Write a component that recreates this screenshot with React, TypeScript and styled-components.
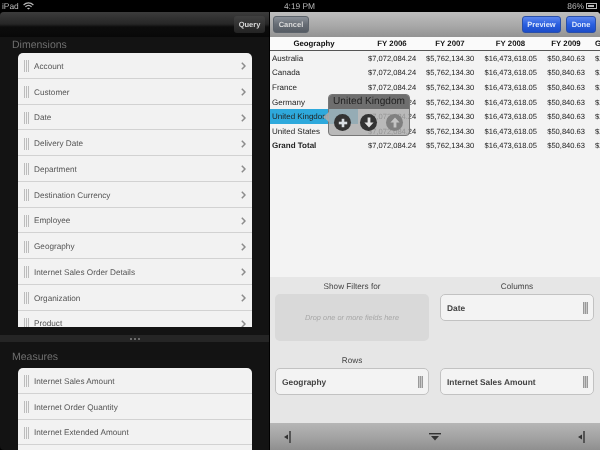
import styled, { createGlobalStyle } from 'styled-components';

const GlobalStyle = createGlobalStyle`
  html, body {
    margin: 0;
    padding: 0;
    background: #000;
  }
  * {
    box-sizing: border-box;
  }
`;

const Screen = styled.div`
  width: 600px;
  height: 450px;
  overflow: hidden;
  display: flex;
  flex-direction: column;
  background: #000;
  font-family: 'Liberation Sans', Arial, sans-serif;
  text-rendering: geometricPrecision;
  filter: blur(0.35px);
`;

const StatusBar = styled.div`
  height: 12px;
  flex: none;
  display: grid;
  grid-template-columns: 1fr auto 1fr;
  align-items: center;
  padding: 0 3px 0 2px;
  color: #b8b8b8;
  font-size: 8.4px;
`;

const StatusLeft = styled.div`
  display: flex;
  align-items: center;
  gap: 4px;
`;

const StatusRight = styled.div`
  display: flex;
  align-items: center;
  justify-content: flex-end;
  gap: 2px;
`;

const Battery = styled.span`
  width: 11px;
  height: 6px;
  border: 1px solid #b8b8b8;
  padding: 1px;
  display: block;

  &::before {
    content: '';
    display: block;
    width: 86%;
    height: 100%;
    background: #b8b8b8;
  }
`;

const Panels = styled.div`
  flex: 1;
  min-height: 0;
  display: flex;
  gap: 1px;
  border-radius: 4px 4px 0 0;
  overflow: hidden;
`;

const LeftPanel = styled.div`
  width: 269px;
  flex: none;
  display: flex;
  flex-direction: column;
  background: #131313;
  border-bottom-left-radius: 4px;
  overflow: hidden;
`;

const LeftToolbar = styled.div`
  height: 25px;
  flex: none;
  display: flex;
  align-items: center;
  justify-content: flex-end;
  padding-right: 4px;
  background: linear-gradient(#3c3c3c, #262626 48%, #0c0c0c 60%, #080808);
`;

const QueryButton = styled.div`
  width: 31px;
  height: 17px;
  border-radius: 3px;
  background: linear-gradient(#404040, #232323);
  color: #d8d8d8;
  font-size: 7.5px;
  font-weight: 700;
  display: flex;
  align-items: center;
  justify-content: center;
`;

const SectionTitle = styled.div`
  height: 16px;
  padding-left: 12px;
  display: flex;
  align-items: center;
  color: #6f6f6f;
  font-size: 10.5px;
`;

const DimensionsSection = styled.div`
  height: 298px;
  flex: none;
  padding-bottom: 8px;
  display: flex;
  flex-direction: column;
`;

const MeasuresSection = styled.div`
  flex: 1;
  min-height: 0;
  padding-top: 7px;
  display: flex;
  flex-direction: column;
  gap: 3px;
`;

const FieldList = styled.div`
  flex: 1;
  min-height: 0;
  margin: 0 17px 0 18px;
  overflow: hidden;
  background: #f2f2f2;
  border-radius: 5px 5px 0 0;
`;

const FieldRow = styled.div`
  height: 25.75px;
  display: flex;
  align-items: center;
  padding: 2px 6px 0;
  border-bottom: 1px solid #d2d2d2;
  color: #555;
  font-size: 8.2px;
`;

const FieldName = styled.span`
  flex: 1;
  margin-left: 5px;
`;

const Grip = styled.span<{ $dark?: boolean }>`
  width: 5px;
  height: 12px;
  flex: none;
  background: repeating-linear-gradient(
    90deg,
    ${(p) => (p.$dark ? '#999' : '#bcbcbc')} 0 1px,
    ${(p) => (p.$dark ? '#c8c8c8' : 'transparent')} 1px 2px
  );
`;

const Splitter = styled.div`
  height: 7px;
  flex: none;
  background: #252525;
  display: flex;
  align-items: center;
  justify-content: center;
  gap: 2px;
`;

const SplitterDot = styled.span`
  width: 2px;
  height: 2px;
  background: #6a6a6a;
`;

const RightPanel = styled.div`
  flex: 1;
  min-width: 0;
  display: flex;
  flex-direction: column;
  background: #f3f3f3;
`;

const RightToolbar = styled.div`
  height: 25px;
  flex: none;
  display: flex;
  align-items: center;
  justify-content: space-between;
  padding: 0 4px 0 3px;
  background: linear-gradient(#bebebe, #a8a8a8 55%, #939393);
`;

const ToolbarGroup = styled.div`
  display: flex;
  gap: 5px;
`;

const ToolButton = styled.div<{ $blue?: boolean; $w: number }>`
  width: ${(p) => p.$w}px;
  height: 17px;
  border-radius: 3px;
  border: 1px solid ${(p) => (p.$blue ? '#2a4fa8' : '#5c636b')};
  background: ${(p) =>
    p.$blue
      ? 'linear-gradient(#5c86ee, #2a5fe0 50%, #1c4cc8)'
      : 'linear-gradient(#8a9098, #676d75 50%, #565c64)'};
  color: ${(p) => (p.$blue ? '#dfe8fb' : '#dcdcdc')};
  font-size: 7.5px;
  font-weight: 700;
  display: flex;
  align-items: center;
  justify-content: center;
`;

const TableArea = styled.div`
  position: relative;
  height: 240px;
  flex: none;
  overflow: hidden;
`;

const TableGrid = styled.div`
  display: grid;
  grid-template-columns: 88px 48px 48px 53px 38px 40px;
  column-gap: 10px;
  width: 400px;
`;

const TableRow = styled.div<{ $head?: boolean }>`
  display: grid;
  grid-template-columns: subgrid;
  grid-column: 1 / -1;
  align-items: center;
  height: ${(p) => (p.$head ? '14px' : '14.6px')};
  font-size: 8px;
  color: #222;
  ${(p) =>
    p.$head &&
    `
    background: #fafafa;
    border-bottom: 1px solid #555;
    font-weight: 700;
    color: #111;
  `}
`;

const HeadCell = styled.div`
  text-align: center;
  white-space: nowrap;
  font-size: 7.8px;
`;

const NameCell = styled.div<{ $active?: boolean; $bold?: boolean }>`
  height: 100%;
  display: flex;
  align-items: center;
  padding-left: 2px;
  white-space: nowrap;
  background: ${(p) => (p.$active ? '#2ea9dc' : 'transparent')};
  font-weight: ${(p) => (p.$bold ? 700 : 400)};
`;

const ValueCell = styled.div`
  text-align: right;
  white-space: nowrap;
  font-size: 7.55px;
`;

const Popover = styled.div`
  position: absolute;
  left: 58px;
  top: 57px;
  width: 82px;
  height: 42px;
  border-radius: 4px;
  border: 1px solid #777;
  background: rgba(172, 172, 172, 0.82);
`;

const PopoverArrow = styled.span`
  position: absolute;
  left: -6px;
  top: 17px;
  border-style: solid;
  border-width: 5px 6px 5px 0;
  border-color: transparent rgba(172, 172, 172, 0.9) transparent transparent;
`;

const PopoverTitle = styled.div`
  height: 14px;
  border-radius: 3px 3px 0 0;
  background: #6e6e6e;
  color: #222;
  font-size: 10.1px;
  line-height: 14px;
  text-align: center;
  white-space: nowrap;
`;

const PopoverActions = styled.div`
  display: flex;
  gap: 9px;
  padding: 5px 0 0 5px;
`;

const RoundButton = styled.div<{ $off?: boolean }>`
  width: 17px;
  height: 17px;
  border-radius: 50%;
  background: ${(p) => (p.$off ? '#808080' : '#333')};
  display: flex;
  align-items: center;
  justify-content: center;
`;

const DropArea = styled.div`
  flex: 1;
  min-height: 0;
  display: grid;
  grid-template-columns: 154px 154px;
  grid-template-rows: 74px 1fr;
  column-gap: 11px;
  padding: 0 6px 0 5px;
  background: #e6e6e6;
`;

const DropColumn = styled.div`
  display: flex;
  flex-direction: column;
`;

const DropLabel = styled.div`
  height: 17px;
  padding-top: 1px;
  display: flex;
  align-items: center;
  justify-content: center;
  color: #444;
  font-size: 8.2px;
`;

const DropHint = styled.div`
  height: 47px;
  border-radius: 5px;
  background: #d9d9d9;
  color: #a8a8a8;
  font-size: 7.4px;
  font-style: italic;
  display: flex;
  align-items: center;
  justify-content: center;
`;

const DropField = styled.div`
  height: 27px;
  border-radius: 5px;
  border: 1px solid #c2c2c2;
  background: #f3f3f3;
  color: #444;
  font-size: 8.4px;
  font-weight: 700;
  display: flex;
  align-items: center;
  justify-content: space-between;
  padding: 0 5px 0 6px;
`;

const BottomBar = styled.div`
  height: 27px;
  flex: none;
  display: flex;
  align-items: center;
  justify-content: space-between;
  padding: 0 15px 0 14px;
  background: linear-gradient(#b6b6b6, #a2a2a2 55%, #8f8f8f);
`;

const WifiIcon = () => (
  <svg width="11" height="8" viewBox="0 0 11 8" fill="none" stroke="#b8b8b8" strokeWidth="1.2">
    <path d="M0.6 3 C3.4 0.2 7.6 0.2 10.4 3" />
    <path d="M2.4 4.8 C4.2 3.2 6.8 3.2 8.6 4.8" />
    <path d="M5.5 7.6 L3.9 6.2 C4.8 5.5 6.2 5.5 7.1 6.2 Z" fill="#b8b8b8" stroke="none" />
  </svg>
);

const Chevron = () => (
  <svg width="5" height="8" viewBox="0 0 5 8" fill="none" stroke="#8c8c8c" strokeWidth="1.5">
    <path d="M0.8 0.8 L4 4 L0.8 7.2" />
  </svg>
);

const PanelArrow = () => (
  <svg width="7" height="12" viewBox="0 0 7 12" fill="#333">
    <path d="M4 3.5 L0 6 L4 8.5 Z" />
    <rect x="5" y="0" width="2" height="12" fill="#555" />
  </svg>
);

const CollapseArrow = () => (
  <svg width="12" height="8" viewBox="0 0 12 8" fill="#333">
    <rect x="0" y="0" width="12" height="1.4" />
    <path d="M2 3 L10 3 L6 7.4 Z" />
  </svg>
);

const PlusIcon = () => (
  <svg width="10" height="10" viewBox="0 0 10 10" fill="#d8dde2">
    <rect x="3.7" y="0.8" width="2.6" height="8.4" />
    <rect x="0.8" y="3.7" width="8.4" height="2.6" />
  </svg>
);

const ArrowIcon = ({ up }: { up?: boolean }) => (
  <svg width="10" height="11" viewBox="0 0 10 11" fill={up ? '#c4c4c4' : '#e2e2e2'}>
    <path d={up ? 'M5 0.5 L9.6 5.4 L6.4 5.4 L6.4 10.5 L3.6 10.5 L3.6 5.4 L0.4 5.4 Z' : 'M5 10.5 L9.6 5.6 L6.4 5.6 L6.4 0.5 L3.6 0.5 L3.6 5.6 L0.4 5.6 Z'} />
  </svg>
);

const dimensions = [
  'Account',
  'Customer',
  'Date',
  'Delivery Date',
  'Department',
  'Destination Currency',
  'Employee',
  'Geography',
  'Internet Sales Order Details',
  'Organization',
  'Product',
];

const measures = ['Internet Sales Amount', 'Internet Order Quantity', 'Internet Extended Amount'];

const countries = ['Australia', 'Canada', 'France', 'Germany', 'United Kingdom', 'United States', 'Grand Total'];

const values = ['$7,072,084.24', '$5,762,134.30', '$16,473,618.05', '$50,840.63', '$29,308,677.22'];

const headers = ['Geography', 'FY 2006', 'FY 2007', 'FY 2008', 'FY 2009', 'Grand Total'];

const App = () => {
  return (
    <Screen>
      <GlobalStyle />
      <StatusBar>
        <StatusLeft>
          iPad
          <WifiIcon />
        </StatusLeft>
        <span>4:19 PM</span>
        <StatusRight>
          86%
          <Battery />
        </StatusRight>
      </StatusBar>
      <Panels>
        <LeftPanel>
          <LeftToolbar>
            <QueryButton>Query</QueryButton>
          </LeftToolbar>
          <DimensionsSection>
            <SectionTitle>Dimensions</SectionTitle>
            <FieldList>
              {dimensions.map((name) => (
                <FieldRow key={name}>
                  <Grip />
                  <FieldName>{name}</FieldName>
                  <Chevron />
                </FieldRow>
              ))}
            </FieldList>
          </DimensionsSection>
          <Splitter>
            <SplitterDot />
            <SplitterDot />
            <SplitterDot />
          </Splitter>
          <MeasuresSection>
            <SectionTitle>Measures</SectionTitle>
            <FieldList>
              {measures.map((name) => (
                <FieldRow key={name}>
                  <Grip />
                  <FieldName>{name}</FieldName>
                </FieldRow>
              ))}
            </FieldList>
          </MeasuresSection>
        </LeftPanel>
        <RightPanel>
          <RightToolbar>
            <ToolButton $w={36}>Cancel</ToolButton>
            <ToolbarGroup>
              <ToolButton $blue $w={39}>Preview</ToolButton>
              <ToolButton $blue $w={30}>Done</ToolButton>
            </ToolbarGroup>
          </RightToolbar>
          <TableArea>
            <TableGrid>
              <TableRow $head>
                {headers.map((h) => (
                  <HeadCell key={h}>{h}</HeadCell>
                ))}
              </TableRow>
              {countries.map((country) => (
                <TableRow key={country}>
                  <NameCell $active={country === 'United Kingdom'} $bold={country === 'Grand Total'}>
                    {country}
                  </NameCell>
                  {values.map((v) => (
                    <ValueCell key={v}>{v}</ValueCell>
                  ))}
                </TableRow>
              ))}
            </TableGrid>
            <Popover>
              <PopoverArrow />
              <PopoverTitle>United Kingdom</PopoverTitle>
              <PopoverActions>
                <RoundButton>
                  <PlusIcon />
                </RoundButton>
                <RoundButton>
                  <ArrowIcon />
                </RoundButton>
                <RoundButton $off>
                  <ArrowIcon up />
                </RoundButton>
              </PopoverActions>
            </Popover>
          </TableArea>
          <DropArea>
            <DropColumn>
              <DropLabel>Show Filters for</DropLabel>
              <DropHint>Drop one or more fields here</DropHint>
            </DropColumn>
            <DropColumn>
              <DropLabel>Columns</DropLabel>
              <DropField>
                Date
                <Grip $dark />
              </DropField>
            </DropColumn>
            <DropColumn>
              <DropLabel>Rows</DropLabel>
              <DropField>
                Geography
                <Grip $dark />
              </DropField>
            </DropColumn>
            <DropColumn>
              <DropLabel />
              <DropField>
                Internet Sales Amount
                <Grip $dark />
              </DropField>
            </DropColumn>
          </DropArea>
          <BottomBar>
            <PanelArrow />
            <CollapseArrow />
            <PanelArrow />
          </BottomBar>
        </RightPanel>
      </Panels>
    </Screen>
  );
};

export default App;
